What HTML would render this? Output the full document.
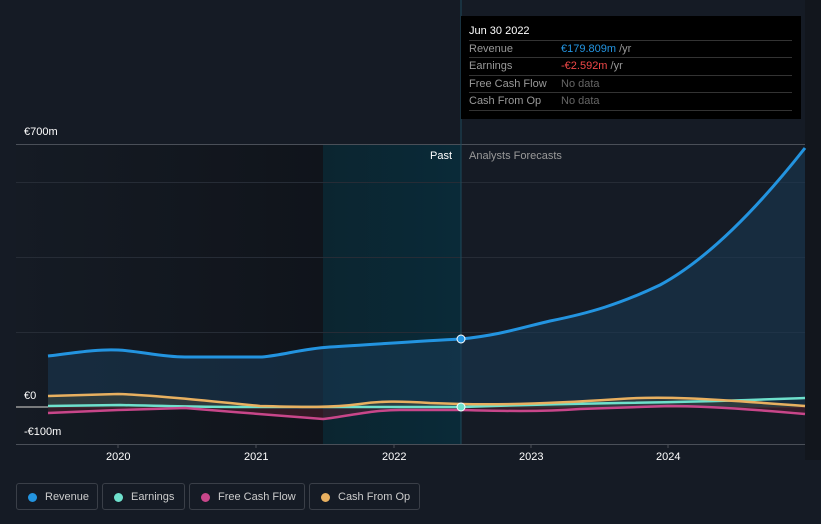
<!DOCTYPE html>
<html><head><meta charset="utf-8"><style>
body{margin:0;width:821px;height:524px;background:#151b25;font-family:"Liberation Sans",sans-serif;overflow:hidden;position:relative}
.t{position:absolute;font-size:11px;color:#fff}
.tip{position:absolute;left:461px;top:16px;width:340px;height:103px;background:#000}
.tip .h{position:absolute;left:8px;top:9px;color:#fff;font-size:11px}
.row{position:absolute;left:8px;width:323px;border-top:1px solid #333;height:17px;font-size:11px;color:#999;line-height:17px}
.row span{position:absolute;left:92px}
.leg{position:absolute;top:483px;height:27px;border:1px solid #3a3f48;border-radius:3px;color:#ccc;font-size:11px;line-height:27px;box-sizing:border-box}
.leg i{position:absolute;left:11px;top:9px;width:9px;height:9px;border-radius:50%}
.leg b{font-weight:normal;position:absolute;left:28px}
</style></head><body>
<svg width="821" height="524" style="position:absolute;left:0;top:0">
<defs>
<linearGradient id="past" x1="0" x2="1"><stop offset="0" stop-color="#151b24"/><stop offset="1" stop-color="#10141b"/></linearGradient>
<linearGradient id="hl" x1="0" x2="1"><stop offset="0" stop-color="#0b2530"/><stop offset="1" stop-color="#0a2a38"/></linearGradient>
</defs>
<rect x="16" y="145" width="307" height="299" fill="url(#past)"/>
<rect x="323" y="145" width="138" height="299" fill="url(#hl)"/>
<rect x="805" y="0" width="16" height="460" fill="#12161d"/>
<g stroke="#262c36" stroke-width="1">
<line x1="16" y1="182.5" x2="805" y2="182.5"/><line x1="16" y1="257.5" x2="805" y2="257.5"/><line x1="16" y1="332.5" x2="805" y2="332.5"/>
</g>
<line x1="16" y1="144.5" x2="805" y2="144.5" stroke="#4a4f58"/>
<line x1="461" y1="0" x2="461" y2="444" stroke="#1d4a5a"/>
<line x1="16" y1="444.5" x2="805" y2="444.5" stroke="#4a4f58"/>
<g stroke="#4a4f58"><line x1="118" y1="444" x2="118" y2="448"/><line x1="256" y1="444" x2="256" y2="448"/><line x1="394" y1="444" x2="394" y2="448"/><line x1="531" y1="444" x2="531" y2="448"/><line x1="668" y1="444" x2="668" y2="448"/></g>
<path d="M48,356 C80,352 100,349 118,350 C140,351 160,357 185,357 L262,357 C285,355 300,349 330,347 C380,344 420,341 461,339 C500,335 520,328 550,321 C590,313 620,304 660,285 C710,258 760,205 805,148 L805,407 L48,407Z" fill="#1a3a55" fill-opacity=".55"/>
<path d="M48,396 L118,394 C150,395 200,400 260,406 C300,407 330,408 360,404 C380,401 400,401 430,403 L461,404 C500,405 560,403 620,399 C660,396 700,398 805,406 L805,408 L48,408Z" fill="#5a5a40" fill-opacity=".35"/>
<path d="M48,413 L118,410 L185,408 C230,412 290,416 323,419 C350,416 370,410 400,410 L461,410 C500,411 540,412 580,409 L668,406 C710,406 760,410 805,414 L805,407 L48,407Z" fill="#5a1f30" fill-opacity=".45"/>
<path d="M48,356 C80,352 100,349 118,350 C140,351 160,357 185,357 L262,357 C285,355 300,349 330,347 C380,344 420,341 461,339 C500,335 520,328 550,321 C590,313 620,304 660,285 C710,258 760,205 805,148" fill="none" stroke="#2394e0" stroke-width="3"/>
<path d="M48,406 L120,405 C160,406 200,407 240,407 C300,407 380,407 461,407 C520,405 560,404 620,403 C700,402 750,400 805,398" fill="none" stroke="#6ee0cc" stroke-width="2.5"/>
<path d="M48,413 L118,410 L185,408 C230,412 290,416 323,419 C350,416 370,410 400,410 L461,410 C500,411 540,412 580,409 L668,406 C710,406 760,410 805,414" fill="none" stroke="#c8468a" stroke-width="2.5"/>
<path d="M48,396 L118,394 C150,395 200,400 260,406 C300,407 330,408 360,404 C380,401 400,401 430,403 L461,404 C500,405 560,403 620,399 C660,396 700,398 805,406" fill="none" stroke="#e8b060" stroke-width="2.5"/>
<line x1="16" y1="407" x2="48" y2="407" stroke="#999" stroke-width="1.5"/>
<circle cx="461" cy="339" r="4" fill="#2394e0" stroke="#fff" stroke-width="1"/>
<circle cx="461" cy="407" r="4" fill="#6ee0cc" stroke="#fff" stroke-width="1"/>
</svg>
<div class="t" style="left:24px;top:126px">€700m</div>
<div class="t" style="left:24px;top:390px">€0</div>
<div class="t" style="left:24px;top:426px">-€100m</div>
<div class="t" style="left:430px;top:150px">Past</div>
<div class="t" style="left:469px;top:150px;color:#999">Analysts Forecasts</div>
<div class="t" style="left:106px;top:451px">2020</div>
<div class="t" style="left:244px;top:451px">2021</div>
<div class="t" style="left:382px;top:451px">2022</div>
<div class="t" style="left:519px;top:451px">2023</div>
<div class="t" style="left:656px;top:451px">2024</div>
<div class="tip"><div class="h">Jun 30 2022</div>
<div class="row" style="top:24px">Revenue<span style="color:#2394e0">€179.809m <em style="font-style:normal;color:#999">/yr</em></span></div>
<div class="row" style="top:41px">Earnings<span style="color:#f04848">-€2.592m <em style="font-style:normal;color:#999">/yr</em></span></div>
<div class="row" style="top:59px">Free Cash Flow<span style="color:#666">No data</span></div>
<div class="row" style="top:76px">Cash From Op<span style="color:#666">No data</span></div>
<div class="row" style="top:94px;height:0"></div>
</div>
<div class="leg" style="left:16px;width:82px"><i style="background:#2394e0"></i><b>Revenue</b></div>
<div class="leg" style="left:102px;width:83px"><i style="background:#6ee0cc"></i><b>Earnings</b></div>
<div class="leg" style="left:189px;width:116px"><i style="background:#c8468a"></i><b>Free Cash Flow</b></div>
<div class="leg" style="left:309px;width:111px"><i style="background:#e8b060"></i><b>Cash From Op</b></div>
</body></html>
